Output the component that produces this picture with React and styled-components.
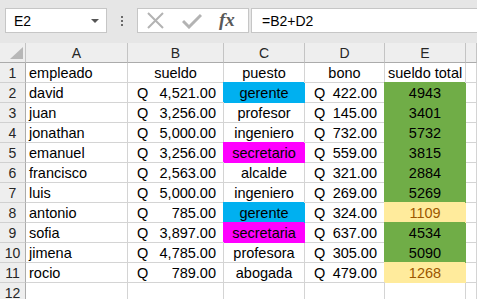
import React from 'react';
import styled, { createGlobalStyle, css } from 'styled-components';

const GlobalStyle = createGlobalStyle`
  html, body {
    margin: 0;
    padding: 0;
    background: #ffffff;
    overflow: hidden;
  }
  body {
    font-family: "Liberation Sans", Arial, sans-serif;
  }
`;

const FILLS = {
  blue: { bg: '#00b0f0', fg: '#000000' },
  magenta: { bg: '#ff00ff', fg: '#000000' },
  green: { bg: '#70ad47', fg: '#000000' },
  yellow: { bg: '#ffeb9c', fg: '#9c5700' },
};

const rows = [
  ['david', '4,521.00', 'gerente', 'blue', '422.00', '4943', 'green'],
  ['juan', '3,256.00', 'profesor', null, '145.00', '3401', 'green'],
  ['jonathan', '5,000.00', 'ingeniero', null, '732.00', '5732', 'green'],
  ['emanuel', '3,256.00', 'secretario', 'magenta', '559.00', '3815', 'green'],
  ['francisco', '2,563.00', 'alcalde', null, '321.00', '2884', 'green'],
  ['luis', '5,000.00', 'ingeniero', null, '269.00', '5269', 'green'],
  ['antonio', '785.00', 'gerente', 'blue', '324.00', '1109', 'yellow'],
  ['sofia', '3,897.00', 'secretaria', 'magenta', '637.00', '4534', 'green'],
  ['jimena', '4,785.00', 'profesora', null, '305.00', '5090', 'green'],
  ['rocio', '789.00', 'abogada', null, '479.00', '1268', 'yellow'],
];

const Page = styled.div`
  width: 477px;
  height: 299px;
  overflow: hidden;
  background: #e6e6e6;
`;

const FormulaBar = styled.div`
  display: flex;
  height: 43px;
  box-sizing: border-box;
  padding: 8px 0 10px 5px;
`;

const Box = styled.div`
  box-sizing: border-box;
  height: 25px;
  background: #ffffff;
  border: 1px solid #c6c6c6;
  display: flex;
  align-items: center;
`;

const NameBox = styled(Box)`
  width: 102px;
  padding: 0 7px 0 8px;
  justify-content: space-between;
  font-size: 14px;
  color: #000000;
`;

const Caret = styled.span`
  width: 0;
  height: 0;
  border-left: 4px solid transparent;
  border-right: 4px solid transparent;
  border-top: 4px solid #555555;
  margin-top: 1px;
`;

const Dots = styled.div`
  width: 30px;
  display: flex;
  flex-direction: column;
  align-items: center;
  justify-content: center;
  gap: 2px;
  span {
    width: 2px;
    height: 2px;
    background: #6a6a6a;
  }
`;

const IconBox = styled(Box)`
  width: 112px;
  margin-right: 2px;
  padding-left: 9px;
  gap: 18px;
`;

const Fx = styled.span`
  font-family: "Liberation Serif", "DejaVu Serif", serif;
  font-style: italic;
  font-weight: bold;
  font-size: 19px;
  color: #595959;
  margin-left: -1px;
  line-height: 1;
  margin-top: -2px;
`;

const FormulaInput = styled(Box)`
  flex: 1;
  border-right: none;
  padding-left: 10px;
  font-size: 14px;
  color: #000000;
`;

const Sheet = styled.div`
  display: grid;
  grid-template-columns: 26px 102px 96px 81px 80px 81px 1fr;
  grid-auto-rows: 20px;
  background: #ffffff;
  font-size: 14.5px;
`;

const Cell = styled.div`
  box-sizing: border-box;
  border-right: 1px solid #d4d4d4;
  border-bottom: 1px solid #d4d4d4;
  line-height: 20px;
  padding: 0 3px;
  white-space: nowrap;
  overflow: visible;
  color: #000000;
  text-align: ${({ $align }) => $align || 'left'};
  ${({ $fill }) =>
    $fill &&
    css`
      position: relative;
      background: ${FILLS[$fill].bg};
      color: ${FILLS[$fill].fg};
      border-color: ${FILLS[$fill].bg};
      box-shadow: -1px -1px 0 0 ${FILLS[$fill].bg};
    `}
`;

const Money = styled(Cell)`
  display: flex;
  justify-content: space-between;
  padding: 0 7px 0 9px;
`;

const ColHeader = styled.div`
  box-sizing: border-box;
  background: #eeeeee;
  border-right: 1px solid #c4c4c4;
  border-bottom: 1px solid #ababab;
  text-align: center;
  line-height: 20px;
  font-size: 14px;
  color: #262626;
`;

const Corner = styled(ColHeader)`
  display: flex;
  align-items: flex-end;
  justify-content: flex-end;
  padding: 0 2px 3px 0;
  &::after {
    content: '';
    width: 0;
    height: 0;
    border-left: 13px solid transparent;
    border-bottom: 12px solid #b7b7b7;
  }
`;

const RowHeader = styled.div`
  box-sizing: border-box;
  background: #eeeeee;
  border-right: 1px solid #ababab;
  border-bottom: 1px solid #d0d0d0;
  text-align: center;
  line-height: 20px;
  font-size: 14px;
  color: #262626;
`;

const CrossIcon = () => (
  <svg width="17" height="17" viewBox="0 0 17 17">
    <path d="M1 1 L16 16 M16 1 L1 16" stroke="#b3b3b3" strokeWidth="2" fill="none" />
  </svg>
);

const CheckIcon = () => (
  <svg width="20" height="16" viewBox="0 0 20 16">
    <path d="M1 8 L7 14 L19 2" stroke="#b3b3b3" strokeWidth="3" fill="none" />
  </svg>
);

const MoneyCell = ({ value }) => (
  <Money>
    <span>Q</span>
    <span>{value}</span>
  </Money>
);

const App = () => (
  <Page>
    <GlobalStyle />
    <FormulaBar>
      <NameBox>
        <span>E2</span>
        <Caret />
      </NameBox>
      <Dots>
        <span />
        <span />
        <span />
      </Dots>
      <IconBox>
        <CrossIcon />
        <CheckIcon />
        <Fx>fx</Fx>
      </IconBox>
      <FormulaInput>=B2+D2</FormulaInput>
    </FormulaBar>
    <Sheet>
      <Corner />
      {['A', 'B', 'C', 'D', 'E', ''].map((c) => (
        <ColHeader key={c}>{c}</ColHeader>
      ))}

      <RowHeader>1</RowHeader>
      <Cell>empleado</Cell>
      <Cell $align="center">sueldo</Cell>
      <Cell $align="center">puesto</Cell>
      <Cell $align="center">bono</Cell>
      <Cell $align="center">sueldo total</Cell>
      <Cell />

      {rows.map(([name, sueldo, puesto, puestoFill, bono, total, totalFill], i) => (
        <React.Fragment key={name}>
          <RowHeader>{i + 2}</RowHeader>
          <Cell>{name}</Cell>
          <MoneyCell value={sueldo} />
          <Cell $align="center" $fill={puestoFill}>{puesto}</Cell>
          <MoneyCell value={bono} />
          <Cell $align="center" $fill={totalFill}>{total}</Cell>
          <Cell />
        </React.Fragment>
      ))}

      <RowHeader>12</RowHeader>
      <Cell />
      <Cell />
      <Cell />
      <Cell />
      <Cell />
      <Cell />
    </Sheet>
  </Page>
);

export default App;
